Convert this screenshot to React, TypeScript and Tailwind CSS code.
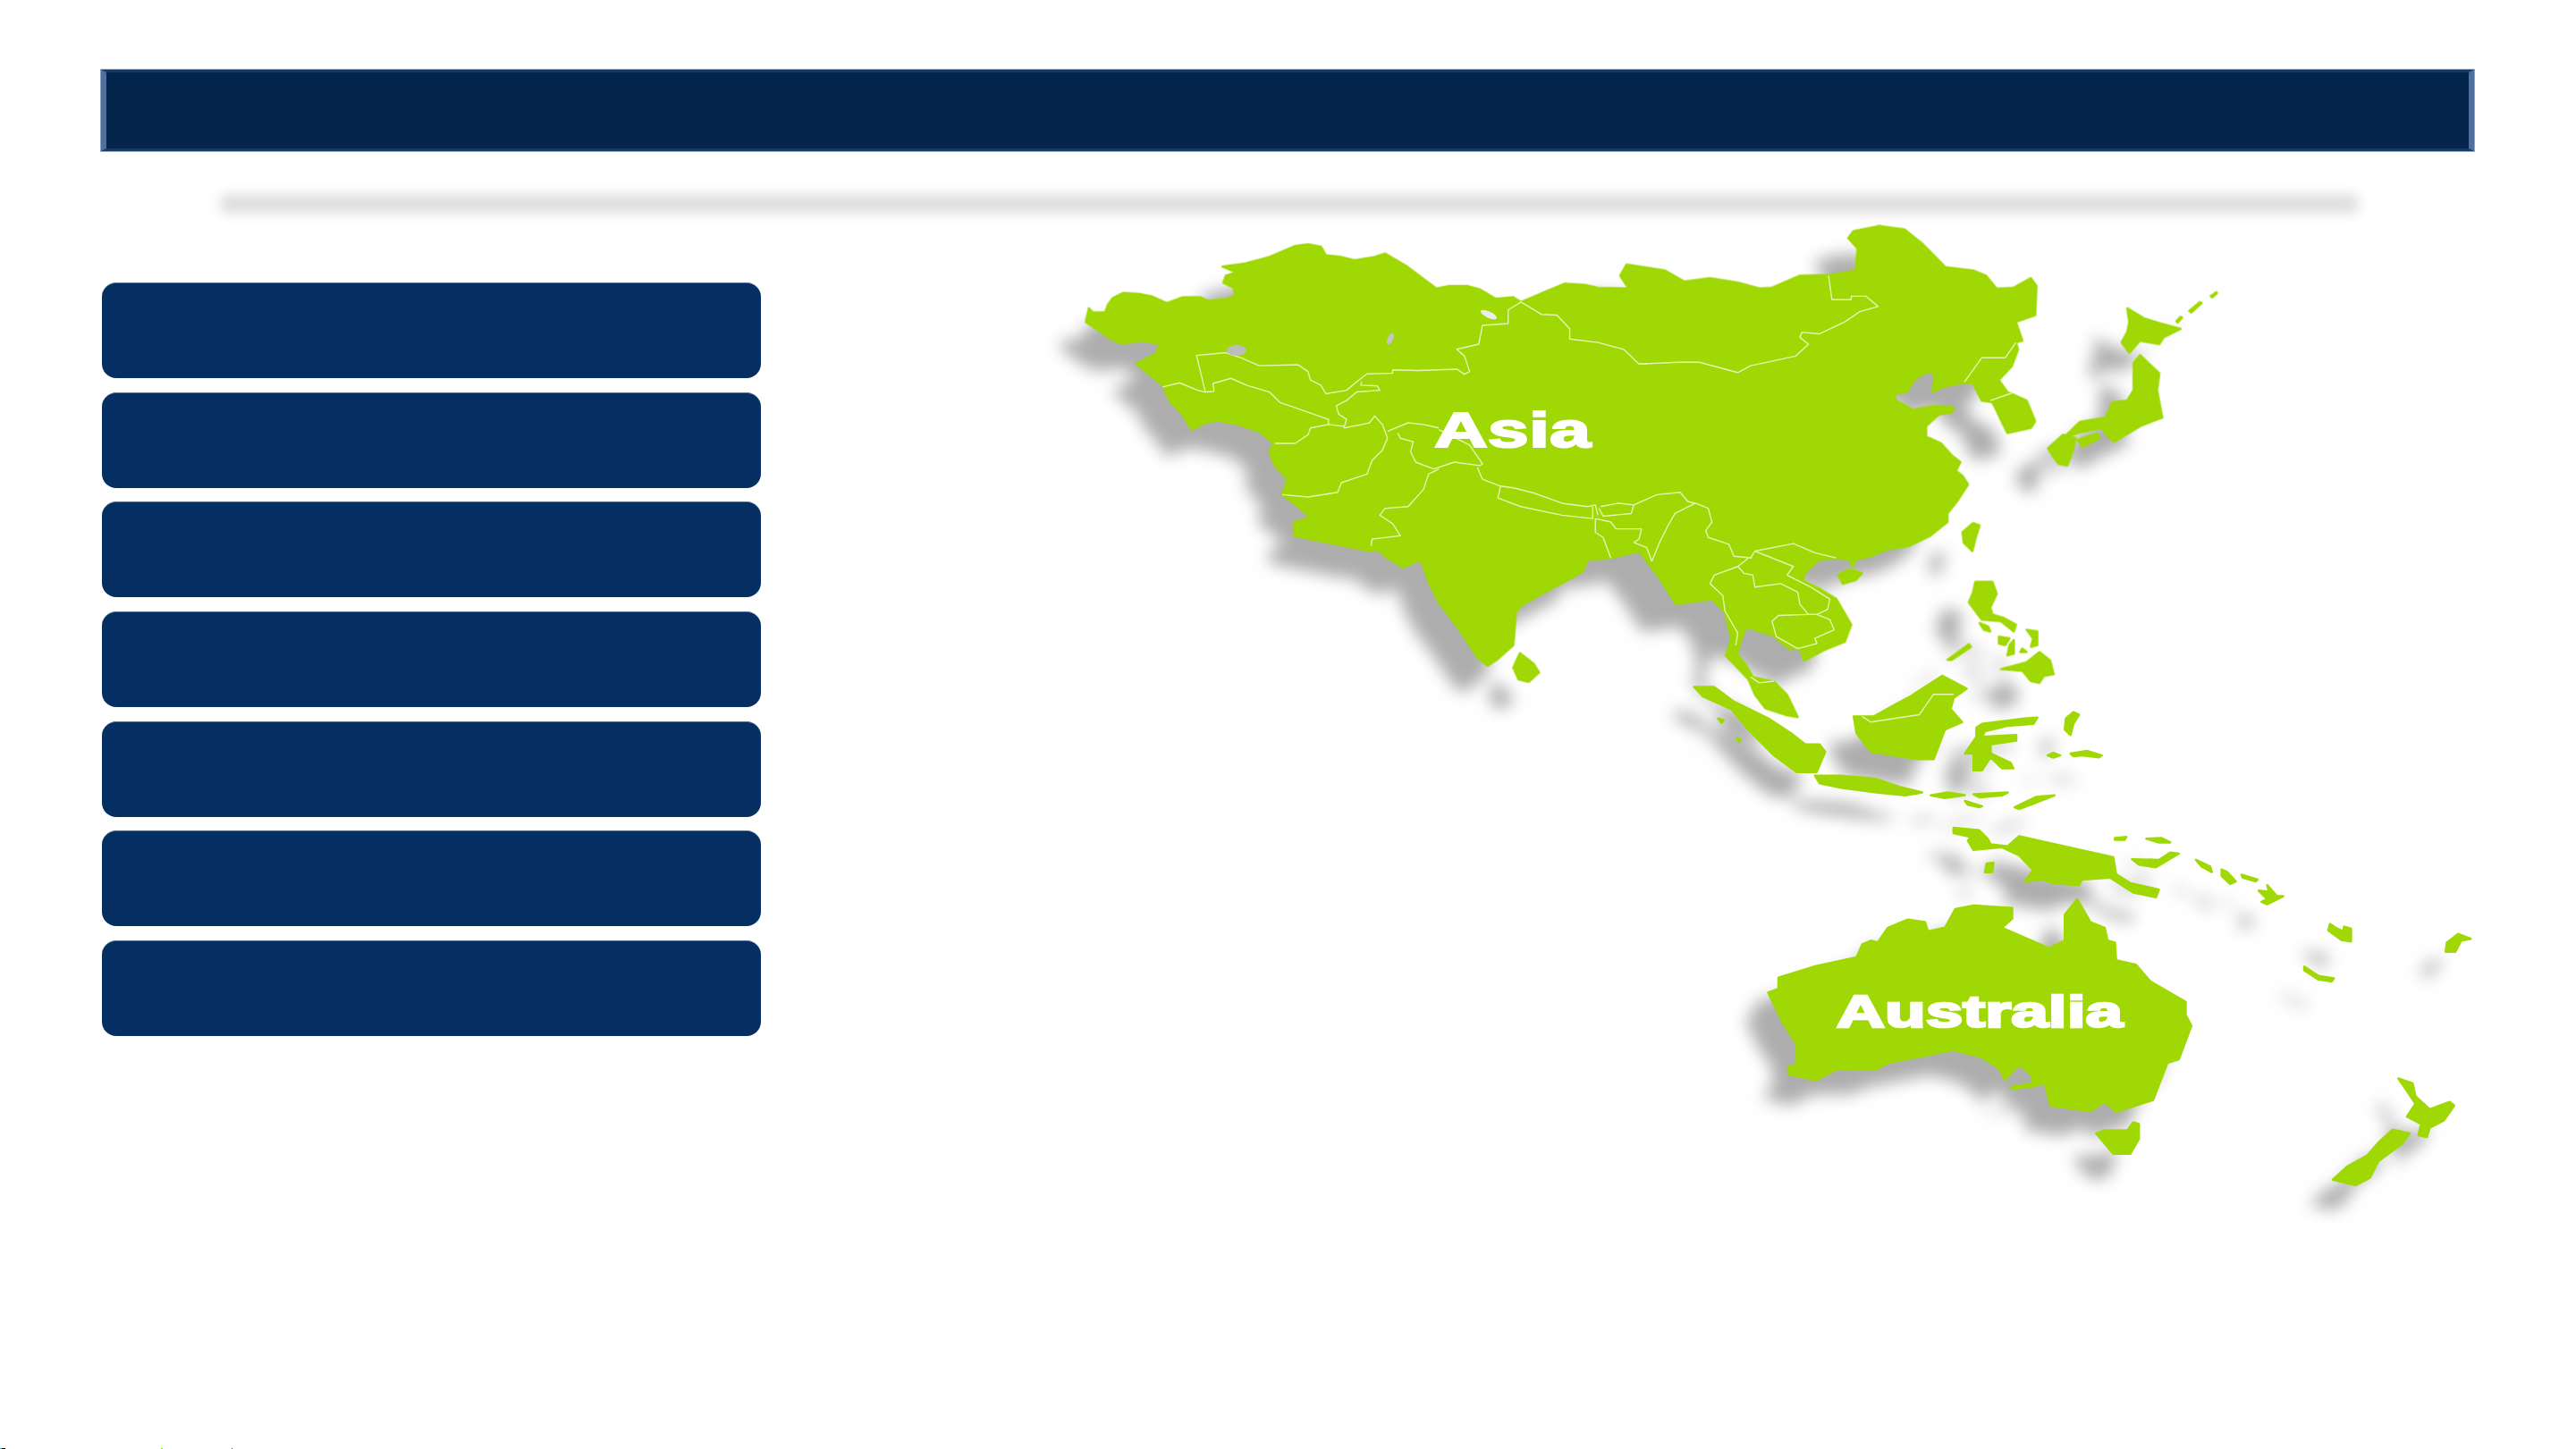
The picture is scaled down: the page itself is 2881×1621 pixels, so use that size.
import React from 'react'

const GREEN = '#9fd804'
const LINE = '#e6f4b4'

// coordinates are traced per region, the groups below map them onto the page
const westLand = [
  '118,300 125,312 150,312 155,290 165,270 185,255 215,258 240,265 270,285 300,268 335,268 350,278 385,272 403,265 400,240 380,225 385,205 405,195 378,178 420,170 470,150 520,118 545,113 570,120 580,145 610,150 635,160 675,150 695,140 735,175 795,242 820,235 855,235 880,245 910,272 945,268 960,282 1010,250 1045,228 1085,232 1110,240 1170,243 1185,1012 1135,1030 1090,1035 1080,1070 1045,1100 1000,1135 960,1170 950,1190 945,1285 915,1325 895,1345 875,1320 840,1240 800,1160 780,1100 765,1035 730,1058 700,1030 680,1005 668,1010 600,990 518,965 518,925 550,912 525,880 495,845 505,800 480,760 470,720 478,695 450,660 410,640 370,628 345,635 318,655 300,610 275,570 262,525 210,462 250,432 255,405 225,395 180,403 155,385 140,368 112,340',
  '958,1308 985,1340 995,1365 975,1392 955,1385 945,1350',
]

const eastLand = [
  '0,243 45,243 25,205 40,172 130,190 175,222 235,212 300,225 350,242 380,240 445,205 515,203 575,190 580,125 558,95 570,75 630,60 690,70 730,110 785,180 850,190 880,205 905,243 945,240 985,212 998,235 995,320 950,340 965,395 950,400 955,420 940,470 910,510 930,545 975,570 995,630 985,650 930,665 920,640 905,600 895,575 870,570 850,520 825,518 780,530 755,545 760,495 745,485 715,505 695,545 665,550 670,570 710,597 760,585 805,590 800,605 770,610 740,645 740,675 775,695 800,730 820,750 810,775 825,790 838,815 815,860 790,900 790,925 750,965 700,995 650,1005 610,1025 575,1035 570,1055 560,1035 530,1030 490,1035 460,1070 450,1095 490,1120 530,1150 565,1225 550,1275 500,1300 455,1330 445,1295 420,1295 380,1255 350,1245 320,1230 308,1270 298,1310 320,1345 335,1378 385,1392 415,1430 440,1495 415,1490 365,1470 340,1430 325,1385 295,1345 272,1315 285,1265 270,1190 240,1150 155,1165 115,1085 90,1045 70,1010 0,1025',
  '535,1080 560,1062 590,1075 575,1095 545,1105',
  '850,928 865,935 855,975 848,1010 828,985 825,955',
  '1210,300 1250,330 1290,345 1335,360 1295,385 1285,405 1240,395 1215,430 1197,400 1210,370 1215,340',
  '1240,437 1285,490 1280,540 1292,620 1270,630 1240,645 1180,690 1165,675 1150,650 1095,665 1060,680 1100,632 1160,620 1175,575 1210,570 1225,540 1225,460',
  '1025,710 1060,670 1090,680 1082,720 1070,760 1050,755 1035,730',
  '1095,685 1140,665 1145,680 1105,705',
  '1325,338 1335,325 1338,328 1328,342',
  '1355,308 1380,282 1384,285 1360,312',
  '1405,265 1418,253 1420,256 1409,268',
  '855,1100 895,1100 905,1135 890,1175 895,1195 920,1205 950,1225 945,1245 915,1215 870,1210 840,1160 850,1130',
  '865,1220 885,1230 890,1245 875,1240',
  '975,1240 1000,1245 1000,1285 985,1290 990,1265',
  '910,1260 935,1265 925,1285 910,1280',
  '935,1285 945,1270 945,1310 930,1315',
  '965,1295 975,1305 960,1305',
  '790,1328 840,1282 845,1290 800,1328',
  '915,1355 975,1335 1005,1305 1030,1330 1038,1370 1015,1375 1005,1395 985,1390 965,1360',
]

const southLand = [
  '70,165 105,165 140,205 200,250 240,290 265,320 290,320 300,340 285,395 250,395 210,350 165,280 135,225 85,190',
  '505,135 548,170 525,195 520,225 540,260 510,280 490,360 460,360 420,350 380,340 355,290 350,245 385,245 420,215 450,190 490,150',
  '575,265 650,250 672,248 665,265 620,270 580,285 575,300 635,295 635,310 590,320 590,345 625,370 630,385 610,385 590,355 575,390 560,390 560,345 545,345 565,300 565,275',
  '735,233 745,240 735,265 730,295 720,280 722,250',
  '690,350 700,343 712,350 700,356',
  '730,345 760,338 785,350 780,355 750,350 735,352',
  '282,405 330,405 385,412 430,435 470,450 440,458 390,450 330,438 290,425',
  '485,458 515,450 545,457 510,465',
  '560,455 620,450 610,458 570,463',
  '545,473 575,487 570,490 550,483',
  '632,490 670,462 702,458 665,480 640,495',
  '525,545 570,552 585,575 590,590 620,595 640,568 805,625 810,670 835,695 885,712 880,733 840,720 800,680 750,685 745,700 700,695 680,685 650,690 665,660 640,620 610,598 560,605 550,580 555,570 525,560',
  '583,642 595,640 593,665 580,665',
  '838,630 885,632 905,612 920,615 880,652 850,645',
  '808,573 828,570 825,578 808,578',
  '863,575 890,573 905,585 885,585',
  '950,632 975,650 978,665 960,650',
  '995,658 1005,665 1020,690 1010,697 995,675',
  '1030,672 1058,685 1055,690 1032,680',
  '1075,700 1092,730 1103,730 1075,752 1065,745 1075,738 1060,715 1078,718',
  '1185,805 1195,815 1208,825 1210,812 1222,818 1222,852 1205,848 1182,822',
  '1140,920 1165,945 1192,952 1188,960 1165,955 1140,930',
  '1410,832 1432,845 1415,850 1405,880 1388,880 1390,855',
  '200,990 218,980 218,950 280,920 355,895 365,860 380,850 392,855 410,815 445,793 475,800 480,825 510,815 528,765 560,755 628,762 628,790 610,815 692,870 720,850 720,780 742,738 765,800 790,815 795,850 808,855 810,903 845,915 870,960 932,1015 932,1050 942,1080 920,1170 900,1180 875,1280 810,1312 790,1285 765,1310 695,1295 685,1235 660,1245 630,1250 625,1245 665,1235 660,1210 640,1185 615,1225 605,1195 575,1165 525,1145 460,1165 410,1180 390,1197 320,1197 283,1227 235,1210 235,1190 250,1185 250,1130 225,1070',
  '775,1370 790,1362 830,1362 840,1340 850,1345 850,1385 835,1425 805,1425',
  '1305,1222 1330,1235 1335,1270 1360,1305 1395,1285 1403,1295 1385,1335 1360,1355 1355,1380 1340,1375 1345,1345 1320,1325 1335,1290 1320,1255',
  '1295,1360 1325,1370 1310,1400 1270,1445 1255,1490 1230,1510 1190,1495 1215,1460 1250,1430 1270,1395',
  '112,250 122,255 118,262',
  '145,303 152,308 148,315',
]

const westBorders = [
  '960,282 935,305 935,345 885,350 878,405 835,420 850,440 860,485 850,493 835,478 760,482 710,480 710,490 660,492 640,515 620,540 580,550 570,525 550,510 545,485 525,465 450,468 415,445 385,430 328,438 345,545 362,543 360,520 395,505 425,525 470,545 490,575 585,625 585,640',
  '345,545 330,540 295,518 262,530',
  '650,515 648,525 680,527 685,540 640,545 620,570 600,585 605,610 620,625 615,650',
  '615,645 585,640 550,650 545,670 520,695 480,695',
  '615,650 650,640 665,635 675,615 690,640 695,660 700,680 690,715 670,745 660,785 610,810 603,838 545,852 495,845',
  '700,660 740,635 770,640 800,650',
  '720,665 725,680 750,690 745,720 755,750 790,770 830,750 880,760 885,755 860,700 800,655',
  '800,770 780,785 770,830 740,880 695,885 685,905 710,930 725,965 670,975 668,995',
  '875,765 885,800 920,820 945,825 985,840 1040,870 1090,880 1105,875 1110,905',
  '920,820 915,855 960,880 1040,905 1100,915 1100,880',
  '1115,880 1150,870 1180,875 1175,900 1120,908 1112,885',
  '1180,875 1225,845 1270,838 1285,865 1300,870 1325,885 1332,925 1320,950 1325,970 1365,990 1375,1025 1410,1030',
  '1300,870 1260,900 1245,940 1230,985 1215,1040',
  '1105,915 1105,955 1120,970 1135,1030',
  '1105,915 1135,925 1145,945 1195,945 1190,975 1180,985 1205,1000 1215,1040',
  '960,282 1000,318 1030,320 1055,360 1055,390 1110,400 1160,420 1190,463 1205,463',
]

const eastBorders = [
  '70,463 160,458 210,458 300,488 330,468 435,440 465,405 445,385 450,370 490,375 550,340 585,310 628,295 600,265 565,265 565,275 520,275 512,205',
  '950,400 925,445 870,445 830,515',
  '890,570 940,548',
  '325,1030 300,1055 245,1080 235,1105 265,1140 270,1185 300,1250 295,1285',
  '300,1055 315,1075 335,1080 340,1115 400,1105 440,1130 445,1165 465,1195 485,1195 510,1180 515,1150 470,1115 415,1080 430,1055 370,1025 340,1010 330,1030',
  '340,1010 430,988 480,1015 530,1030',
  '380,1215 395,1198 465,1195 485,1195 515,1210 525,1240 480,1265 485,1280 440,1295 390,1260 380,1215',
  '330,1378 350,1395 385,1390',
]

function Land() {
  return (
    <>
      <g id="land-west" transform="translate(1150,230) scale(0.574,0.3827)">
        {westLand.map((p) => <polygon key={p} points={p} vectorEffect="non-scaling-stroke" />)}
      </g>
      <g id="land-east" transform="translate(1800,230) scale(0.4785,0.3827)">
        {eastLand.map((p) => <polygon key={p} points={p} vectorEffect="non-scaling-stroke" />)}
      </g>
      <g id="land-south" transform="translate(1850,700) scale(0.6378,0.4145)">
        {southLand.map((p) => <polygon key={p} points={p} vectorEffect="non-scaling-stroke" />)}
      </g>
    </>
  )
}

function AsiaMap() {
  return (
    <svg viewBox="1150 240 1700 1150" className="w-[1700px] h-[1150px] shrink-0">
      <defs>
        <filter id="soft" x="-10%" y="-10%" width="120%" height="120%">
          <feGaussianBlur stdDeviation="9" />
        </filter>
        <Land />
      </defs>

      {/* drop shadow, east of the map falls a bit further out */}
      <g fill="#adadad" filter="url(#soft)">
        <use href="#land-west" transform="translate(-28,31)" />
        <use href="#land-east" transform="translate(-38,31)" />
        <use href="#land-south" transform="translate(-27,28)" />
      </g>
      <g fill={GREEN} stroke={GREEN} strokeWidth="2.5" strokeLinejoin="round">
        <use href="#land-west" />
        <use href="#land-east" />
        <use href="#land-south" />
      </g>

      {/* country lines */}
      <g fill="none" stroke={LINE} strokeWidth="1.4" strokeLinejoin="round">
        <g transform="translate(1150,230) scale(0.574,0.3827)">
          {westBorders.map((p) => <polyline key={p} points={p} vectorEffect="non-scaling-stroke" />)}
        </g>
        <g transform="translate(1800,230) scale(0.4785,0.3827)">
          {eastBorders.map((p) => <polyline key={p} points={p} vectorEffect="non-scaling-stroke" />)}
        </g>
        <g transform="translate(1850,700) scale(0.6378,0.4145)">
          <polyline points="365,245 380,260 465,240 490,185 525,185" vectorEffect="non-scaling-stroke" />
        </g>
      </g>

      {/* lakes */}
      <ellipse cx="1383" cy="392" rx="11" ry="6" fill="#bdbdbd" />
      <ellipse cx="1555" cy="379" rx="3" ry="7" fill="#c4c4c4" transform="rotate(25 1555 379)" />
      <ellipse cx="1665" cy="352" rx="10" ry="3.5" fill="#ececec" transform="rotate(25 1665 352)" />

      <text x="1604" y="500" textLength="175" lengthAdjust="spacingAndGlyphs" stroke="white" strokeWidth="2" className="fill-white font-['Liberation_Sans'] font-bold text-[56px]">Asia</text>
      <text x="2054" y="1149" textLength="320" lengthAdjust="spacingAndGlyphs" stroke="white" strokeWidth="2.5" className="fill-white font-['Liberation_Sans'] font-bold text-[50px]">Australia</text>
    </svg>
  )
}

export default function App() {
  const rows = [1, 2, 3, 4, 5, 6, 7]

  return (
    <div className="h-[1621px] overflow-hidden bg-white flex flex-col font-['Liberation_Sans',sans-serif]">
      {/* Title bar */}
      <div className="ml-[113px] mt-[78px] w-[2654px] h-[91px] shrink-0 bg-[#03244b] ring-1 ring-[#8ea3c0] border-l-[6px] border-r-[6px] border-t-[3px] border-b-[3px] border-l-[#4f6f9c] border-r-[#4f6f9c] border-t-[#163a66] border-b-[#163a66]"></div>

      {/* Faded rule */}
      <div className="ml-[247px] mt-[49px] w-[2390px] h-[20px] shrink-0 bg-[#dcdcdc] blur-[7px]"></div>

      <div className="flex mt-[2px]">
        {/* Buttons */}
        <div className="ml-[114px] mt-[76px] w-[737px] shrink-0 flex flex-col gap-[15.7px]">
          {rows.map((r) => (
            <div key={r} className="h-[107px] rounded-[16px] bg-[#052f62] border-t border-[#50719c]"></div>
          ))}
        </div>

        <div className="ml-[299px]">
          <AsiaMap />
        </div>
      </div>

      <div className="mt-auto h-px shrink-0 flex">
        <div className="w-[2px] bg-[#3aa6b0]"></div>
        <div className="w-[4px] bg-black"></div>
        <div className="ml-[174px] w-[2px] bg-[#8fe000]"></div>
        <div className="ml-[77px] w-px bg-[#e00000]"></div>
      </div>
    </div>
  )
}
